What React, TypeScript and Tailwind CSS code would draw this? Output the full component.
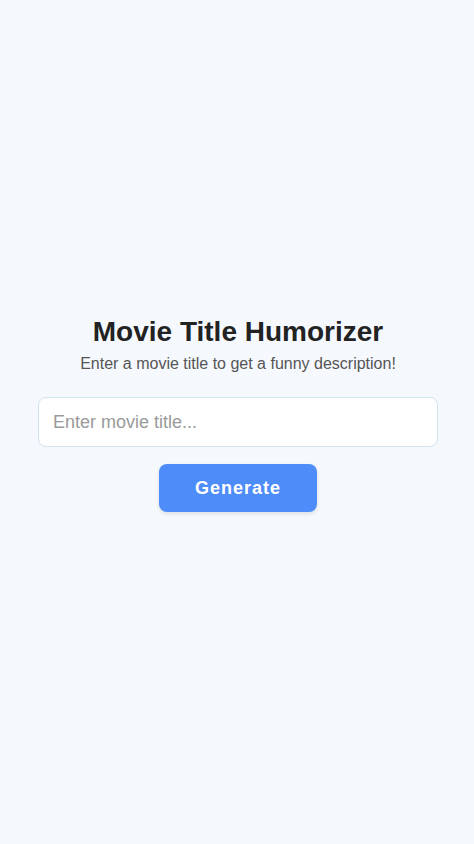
import React, { useState } from 'react';

export default function App() {
  const [title, setTitle] = useState('');

  return (
    <div className="min-h-screen bg-[#f5f9fe] flex items-center justify-center pl-[38px] pr-[36px] pb-[17px] font-['Liberation_Sans',Arial,sans-serif]">
      <div className="w-full max-w-[400px] flex flex-col items-center">
        <h1 className="text-[28px] leading-[34px] font-bold text-[#222]">Movie Title Humorizer</h1>
        <p className="mt-[5px] text-[16px] leading-[20px] text-[#555]">
          Enter a movie title to get a funny description!
        </p>
        <input
          value={title}
          onChange={(e) => setTitle(e.target.value)}
          placeholder="Enter movie title..."
          className="mt-[23px] w-full h-[50px] px-[14px] bg-white border border-[#cfe4ec] rounded-[8px] text-[18px] text-[#333] placeholder:text-[#9a9a9a] outline-none"
        />
        <button className="mt-[17px] w-[158px] h-[48px] rounded-[8px] bg-[#4d8cf9] text-white text-[18px] font-bold tracking-[1px] shadow-[0_2px_4px_rgba(0,0,0,0.1)]">
          Generate
        </button>
      </div>
    </div>
  );
}
